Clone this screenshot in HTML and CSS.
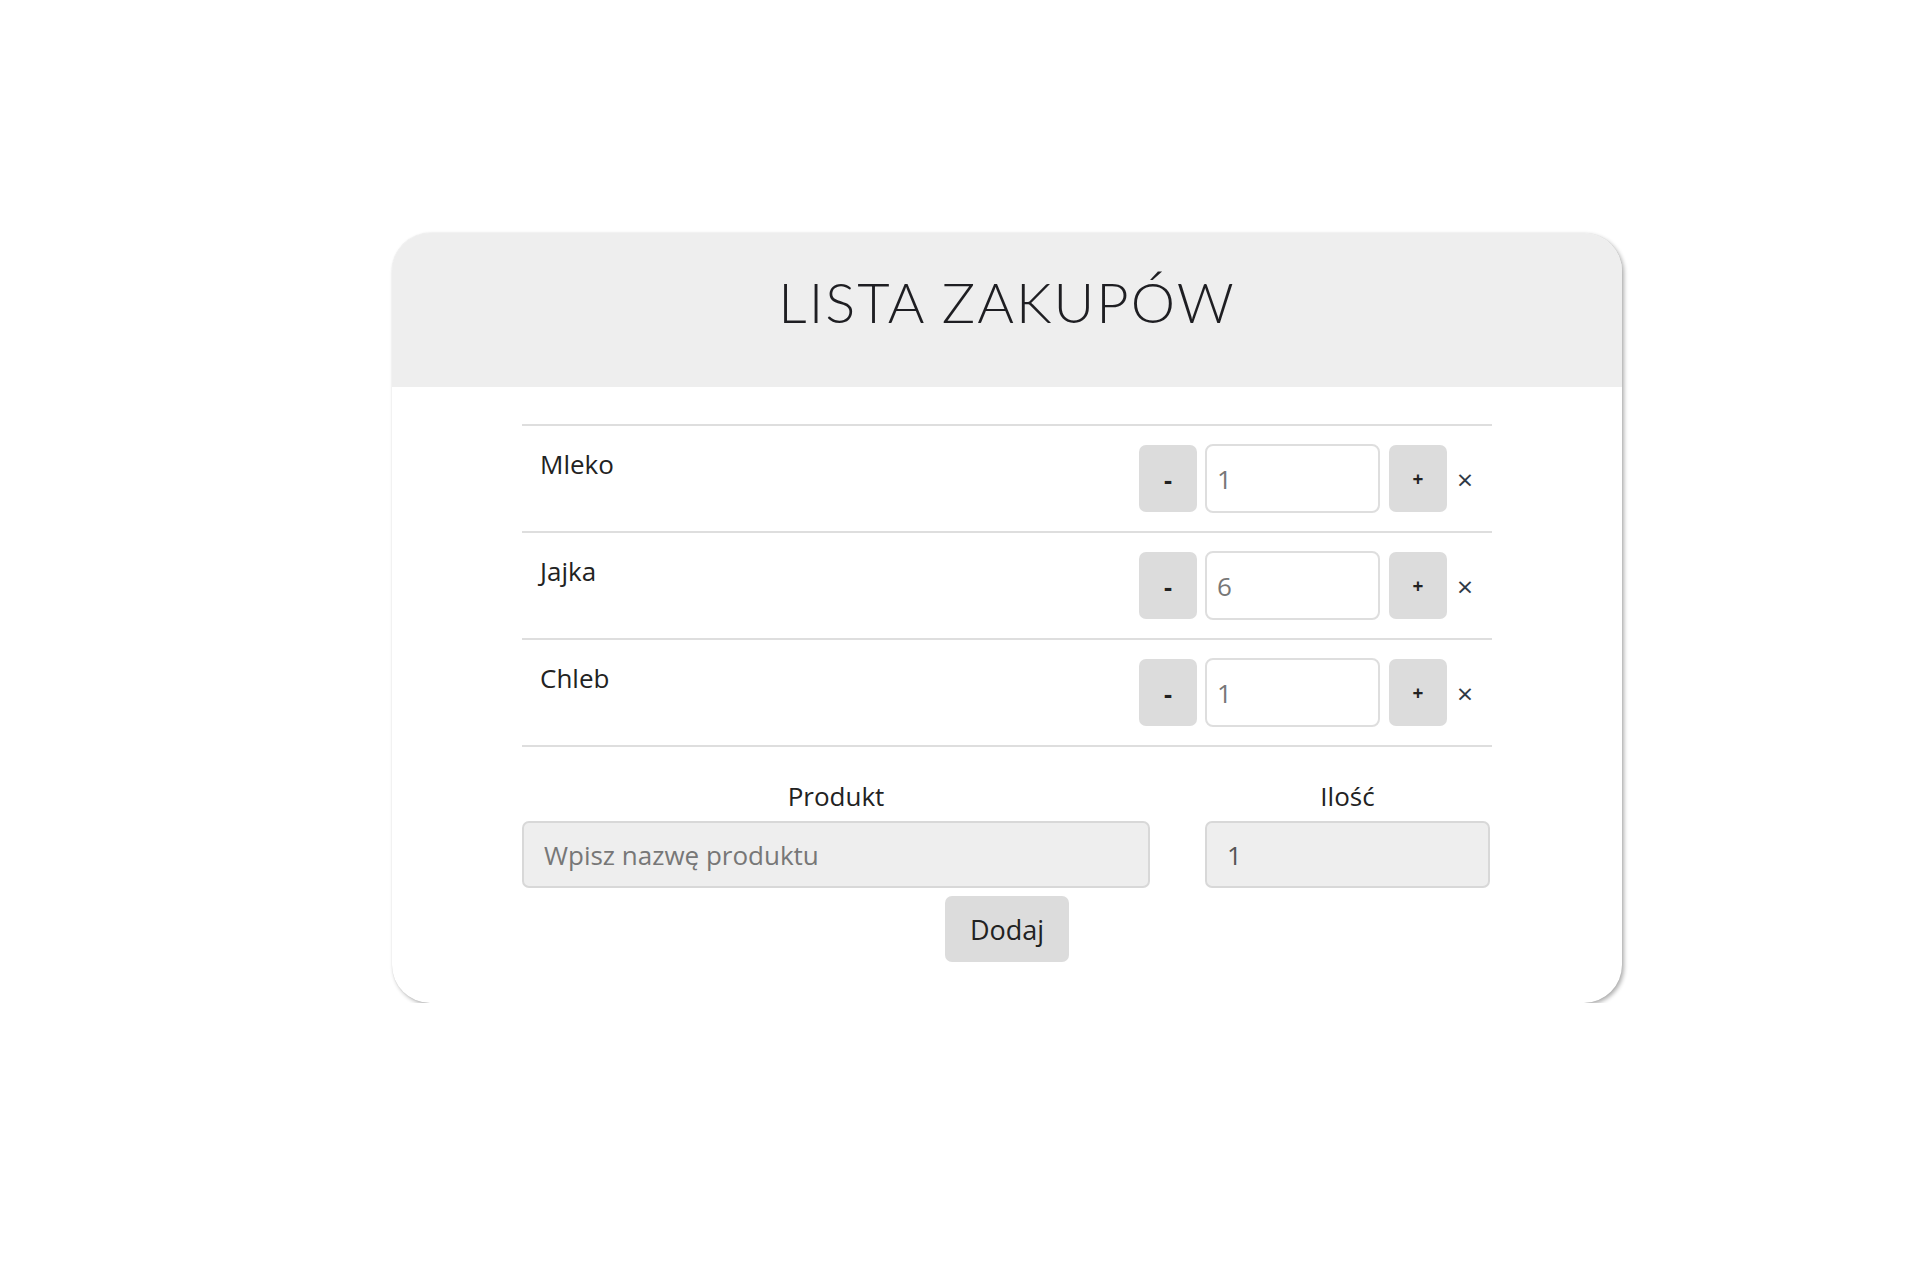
FILE: index.html
```html
<!DOCTYPE html>
<html lang="pl">
<head>
<meta charset="utf-8">
<title>Lista zakupów</title>
<link rel="stylesheet" href="styles.css">
</head>
<body>
<div class="card">
  <header class="card-head">
    <h1 class="title">LISTA ZAKUPÓW</h1>
  </header>
  <main class="card-body">
    <ul class="items">
      <li class="item">
        <span class="item-name">Mleko</span>
        <div class="controls">
          <button class="step minus">-</button>
          <input class="qty" type="text" value="1">
          <button class="step plus">+</button>
          <span class="remove">×</span>
        </div>
      </li>
      <li class="item">
        <span class="item-name">Jajka</span>
        <div class="controls">
          <button class="step minus">-</button>
          <input class="qty" type="text" value="6">
          <button class="step plus">+</button>
          <span class="remove">×</span>
        </div>
      </li>
      <li class="item">
        <span class="item-name">Chleb</span>
        <div class="controls">
          <button class="step minus">-</button>
          <input class="qty" type="text" value="1">
          <button class="step plus">+</button>
          <span class="remove">×</span>
        </div>
      </li>
    </ul>
    <form class="add-form">
      <div class="field field-product">
        <label class="field-label">Produkt</label>
        <input class="field-input" type="text" placeholder="Wpisz nazwę produktu">
      </div>
      <div class="field field-qty">
        <label class="field-label">Ilość</label>
        <input class="field-input dark" type="text" value="1">
      </div>
    </form>
    <div class="actions">
      <button class="add-btn" type="button">Dodaj</button>
    </div>
  </main>
</div>
</body>
</html>
```
FILE: styles.css
```css
* { box-sizing: border-box; }
html, body { margin: 0; padding: 0; background: #fff; }
body {
  font-family: "Open Sans", "Noto Sans", sans-serif;
  color: #222;
  padding-top: 233px;
  padding-left: 392px;
}
.card {
  width: 1230px;
  height: 770px;
  background: #fff;
  border-radius: 38px;
  box-shadow: 2px 2px 4px rgba(0,0,0,0.32), 0 0 1px rgba(0,0,0,0.12);
  overflow: hidden;
}
.card-head {
  height: 154px;
  background: #eeeeee;
  padding-top: 35px;
  text-align: center;
}
.title {
  margin: 0;
  font-family: "Lato", sans-serif;
  font-weight: 300;
  font-size: 56px;
  line-height: 1.2;
  letter-spacing: 2px;
  color: #1e1e22;
}
.card-body {
  width: 970px;
  margin: 0 auto;
  padding-top: 37px;
}
.items {
  list-style: none;
  margin: 0;
  padding: 0;
  border-bottom: 2px solid #dedede;
}
.item {
  display: flex;
  justify-content: space-between;
  align-items: center;
  height: 107px;
  border-top: 2px solid #dedede;
}
.item-name {
  align-self: flex-start;
  padding-top: 20px;
  padding-left: 18px;
  font-size: 26px;
  line-height: 36px;
  color: #222;
}
.controls {
  display: flex;
  align-items: center;
  padding-right: 19px;
}
.step {
  width: 58px;
  height: 67px;
  border: none;
  border-radius: 7px;
  background: #dcdcdc;
  font-family: "Open Sans", sans-serif;
  font-weight: 700;
  font-size: 19px;
  color: #222;
  padding: 0;
}
.step.minus { font-size: 25px; }
.qty {
  width: 175px;
  height: 69px;
  margin: 0 9px 0 8px;
  border: 2px solid #dedede;
  border-radius: 8px;
  background: #fff;
  padding: 0 10px;
  font-family: "Open Sans", sans-serif;
  font-size: 26px;
  color: #777;
}
.remove {
  margin-left: 10px;
  font-size: 28px;
  line-height: 1;
  color: #2f3a46;
}
.add-form {
  display: grid;
  grid-template-columns: 628px 285px;
  column-gap: 55px;
  padding-top: 31px;
}
.field {
  display: flex;
  flex-direction: column;
  align-items: stretch;
}
.field-label {
  text-align: center;
  font-size: 26px;
  line-height: 36px;
  color: #222;
  margin-bottom: 7px;
}
.field-input {
  height: 67px;
  border: 2px solid #d8d8d8;
  border-radius: 7px;
  background: #eeeeee;
  padding: 0 20px;
  font-family: "Open Sans", sans-serif;
  font-size: 26px;
  color: #777;
}
.field-input::placeholder { color: #777; }
.field-input.dark { color: #555; }
.actions {
  display: flex;
  justify-content: center;
  padding-top: 8px;
}
.add-btn {
  width: 124px;
  height: 66px;
  border: none;
  border-radius: 7px;
  background: #dcdcdc;
  font-family: "Open Sans", sans-serif;
  font-size: 27px;
  color: #222;
  padding: 0;
}
```
